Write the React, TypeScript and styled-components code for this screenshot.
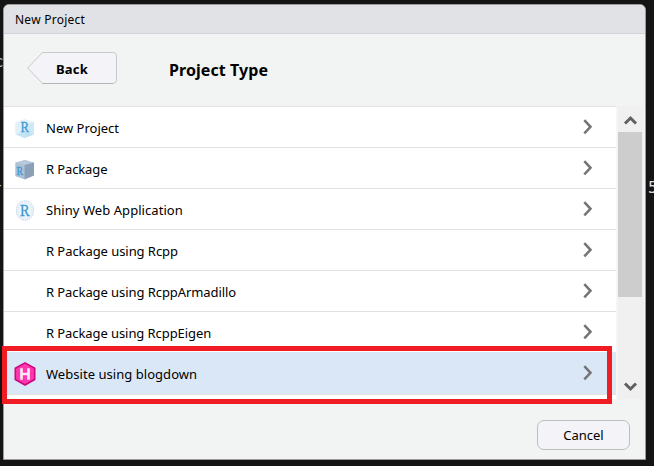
import React from "react";
import styled, { createGlobalStyle } from "styled-components";

const Global = createGlobalStyle`
  * { box-sizing: border-box; }
  body { margin: 0; background: #141414; overflow: hidden; }
`;

const Desktop = styled.div`
  position: relative;
  width: 654px;
  height: 466px;
  padding: 4px 0 0 3px;
  overflow: hidden;
  background: #141414;
  font-family: "Noto Sans", "Open Sans", sans-serif;
  color: #000;
`;

const Fragment = styled.span<{ $x: number; $y: number; $color: string }>`
  position: absolute;
  left: ${(p) => p.$x}px;
  top: ${(p) => p.$y}px;
  font: 16px/18px "DejaVu Sans Mono", monospace;
  color: ${(p) => p.$color};
`;

const Dialog = styled.section`
  position: relative;
  display: flex;
  flex-direction: column;
  width: 643px;
  height: 456px;
  border: 1px solid #9b9b9b;
  border-radius: 6px 6px 0 0;
  background: #f2f4f4;
  overflow: hidden;
`;

const TitleBar = styled.header`
  flex: none;
  height: 29px;
  padding-left: 11px;
  border-bottom: 1px solid #d3d4db;
  background: #e1e2e6;
  font-size: 12px;
  line-height: 30px;
`;

const Label = styled.span<{ $spacing?: number }>`
  letter-spacing: ${(p) => p.$spacing ?? 0}px;
  white-space: nowrap;
`;

const Heading = styled.div`
  flex: none;
  display: flex;
  align-items: flex-start;
  height: 72px;
  padding: 18px 0 0 23px;
`;

const BackButton = styled.button`
  position: relative;
  width: 91px;
  height: 32px;
  padding: 2px 0 0 29px;
  border: 0;
  background: none;
  text-align: left;
  font: bold 13px/30px "Noto Sans", sans-serif;
  color: #000;
`;

const BackShape = styled.svg`
  position: absolute;
  inset: 0;
`;

const BackText = styled(Label)`
  position: relative;
`;

const Title = styled.h1`
  margin: 0 0 0 51px;
  font-size: 16px;
  font-weight: 700;
  line-height: 36px;
`;

const Body = styled.div`
  flex: none;
  display: flex;
  height: 293px;
`;

const List = styled.div`
  width: 613px;
  height: 293px;
  overflow: hidden;
  border-top: 1px solid #e1e1e1;
  border-right: 1px solid #f7f7f7;
  background: #fff;
`;

const Row = styled.div<{ $selected?: boolean }>`
  display: flex;
  align-items: center;
  height: ${(p) => (p.$selected ? 43 : 41)}px;
  margin-top: ${(p) => (p.$selected ? -1 : 0)}px;
  padding: 0 23px ${(p) => (p.$selected ? 1 : 0)}px 10px;
  border-bottom: 1px solid #e1e1e1;
  background: ${(p) => (p.$selected ? "#dae7f7" : "#fff")};
  font-size: 13px;
`;

const IconSlot = styled.span`
  display: flex;
  width: 32px;
  height: 24px;
  margin-top: 2px;
`;

const RowText = styled(Label)`
  flex: 1;
  padding-top: 2px;
`;

const Scrollbar = styled.div`
  display: flex;
  flex-direction: column;
  width: 25px;
  margin-left: 1px;
  background: #f0f0f0;
`;

const ScrollArrow = styled.div`
  display: flex;
  flex: none;
  height: 26px;
`;

const Thumb = styled.div`
  flex: none;
  width: 24px;
  height: 165px;
  margin-bottom: 76px;
  background: #cdcdcd;
`;

const Footer = styled.footer`
  display: flex;
  justify-content: flex-end;
  padding: 21px 15px 0 0;
`;

const CancelButton = styled.button`
  width: 93px;
  height: 30px;
  padding: 0;
  border: 1px solid #bdbdbf;
  border-radius: 7px;
  background: #f4f4f8;
  font: 13px/28px "Noto Sans", sans-serif;
  color: #000;
`;

const Highlight = styled.div`
  position: absolute;
  left: 2px;
  top: 346px;
  width: 610px;
  height: 58px;
  border: 5px solid #ef1c24;
`;

const RLetter = styled.text`
  font-family: "Liberation Serif", serif;
  fill: #3a9ad4;
  stroke: #3a9ad4;
  stroke-width: 0.3px;
`;

const ProjectIcon = () => (
  <svg width="22" height="24">
    <path d="M10.5 3 20 6V18.5L10.5 22 1.5 18.5V6Z" fill="#e4f3fa" />
    <path d="M1.5 6 10.5 9v13L1.5 18.5Z" fill="#e0f1fa" />
    <path d="M10.5 9 20 6v12.5L10.5 22Z" fill="#cfe8f5" />
    <path d="M2 18.5 10.5 15l9 3.5-9 3.5Z" fill="#b3ddf2" opacity=".6" />
    <RLetter x="6.5" y="16.4" fontSize="14.5" textLength="8.5" lengthAdjust="spacingAndGlyphs">R</RLetter>
  </svg>
);

const PackageIcon = () => (
  <svg width="22" height="24">
    <path d="M11 2.8 20 5.5v13L11 22.5 1.5 19V5.5Z" fill="#b9c9da" />
    <path d="M1.5 5.5 10.5 8v14.3L1.5 19Z" fill="#adc1d7" />
    <path d="M10.5 8 20 5.5v13L10.5 22.3Z" fill="#8c9fb8" />
    <RLetter x="2.5" y="17.5" fontSize="13" textLength="6.5" lengthAdjust="spacingAndGlyphs">R</RLetter>
  </svg>
);

const ShinyIcon = () => (
  <svg width="22" height="24">
    <ellipse cx="11" cy="12.5" rx="9.2" ry="10.2" fill="#edf4fa" />
    <ellipse cx="11" cy="12.5" rx="8.6" ry="9.7" fill="none" stroke="#bdd2e5" strokeWidth="1" strokeDasharray="1.2 1" />
    <ellipse cx="11" cy="12.5" rx="6.8" ry="7.8" fill="none" stroke="#d4e2ef" strokeWidth="1" strokeDasharray="1 1.6" />
    <RLetter x="6" y="18" fontSize="17" textLength="9.5" lengthAdjust="spacingAndGlyphs">R</RLetter>
  </svg>
);

const HugoIcon = () => (
  <svg width="22" height="24">
    <path d="M11 .9 20.7 6.3v11.2L11 23 1.3 17.5V6.3Z" fill="#ff36ad" stroke="#c9087e" strokeWidth="1.6" strokeLinejoin="round" />
    <path d="M7.5 6.3v11.4M14.5 6.3v11.4M7.5 12h7" stroke="#ffe6f5" strokeWidth="2.7" fill="none" />
  </svg>
);

const Chevron = () => (
  <svg width="11" height="18" viewBox="0 0 11 18">
    <path d="m2.3 2.2 6.2 6.6-6.2 6.6" fill="none" stroke="#747474" strokeWidth="2.5" />
  </svg>
);

const rows: { text: string; spacing: number; icon?: React.ReactNode; selected?: boolean }[] = [
  { text: "New Project", spacing: 0, icon: <ProjectIcon /> },
  { text: "R Package", spacing: -0.12, icon: <PackageIcon /> },
  { text: "Shiny Web Application", spacing: 0.06, icon: <ShinyIcon /> },
  { text: "R Package using Rcpp", spacing: -0.06 },
  { text: "R Package using RcppArmadillo", spacing: -0.07 },
  { text: "R Package using RcppEigen", spacing: -0.08 },
  { text: "Website using blogdown", spacing: 0.04, icon: <HugoIcon />, selected: true },
];

export default function App() {
  return (
    <Desktop>
      <Global />
      <Fragment $x={-6} $y={53} $color="#9fc3dc">c</Fragment>
      <Fragment $x={-6} $y={176} $color="#b9cbd6">-</Fragment>
      <Fragment $x={648} $y={179} $color="#d9dde0">5</Fragment>
      <Dialog>
        <TitleBar><Label $spacing={0.25}>New Project</Label></TitleBar>
        <Heading>
          <BackButton>
            <BackShape width="91" height="32">
              <path d="M.7 16 15.5.5H86Q89.5.5 89.5 4V28Q89.5 31.5 86 31.5H15.5Z" fill="#f4f4f8" stroke="#c9c9cb" />
              <path d="M15.5 31.5H86" stroke="#b4b4b6" />
            </BackShape>
            <BackText $spacing={0.2}>Back</BackText>
          </BackButton>
          <Title><Label $spacing={0.08}>Project Type</Label></Title>
        </Heading>
        <Body>
          <List>
            {rows.map((r) => (
              <Row key={r.text} $selected={r.selected}>
                <IconSlot>{r.icon}</IconSlot>
                <RowText $spacing={r.spacing}>{r.text}</RowText>
                <Chevron />
              </Row>
            ))}
          </List>
          <Scrollbar>
            <ScrollArrow>
              <svg width="24" height="26"><path d="m7 17.5 5.5-5.5 5.5 5.5" fill="none" stroke="#606060" strokeWidth="3" /></svg>
            </ScrollArrow>
            <Thumb />
            <ScrollArrow>
              <svg width="24" height="26"><path d="m7 10.5 5.5 5.5 5.5-5.5" fill="none" stroke="#606060" strokeWidth="3" /></svg>
            </ScrollArrow>
          </Scrollbar>
        </Body>
        <Footer>
          <CancelButton><Label>Cancel</Label></CancelButton>
        </Footer>
      </Dialog>
      <Highlight />
    </Desktop>
  );
}
